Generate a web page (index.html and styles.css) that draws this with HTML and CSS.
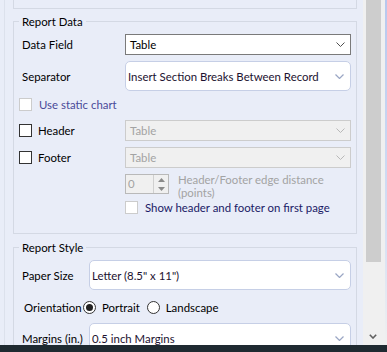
FILE: index.html
```html
<!DOCTYPE html>
<html>
<head>
<meta charset="utf-8">
<link rel="stylesheet" href="styles.css">
</head>
<body>
<div class="screen">
  <div class="main">
    <div class="pane">
      <div class="pane-inner">
        <div class="prev"></div>
        <fieldset class="group group-data">
          <legend>Report Data</legend>
          <div class="row r-field">
            <span class="lbl">Data Field</span>
            <div class="combo combo-flat"><span>Table</span>
              <svg class="chev" width="9" height="5" viewBox="0 0 9 5"><polyline points="0.5,0.5 4.5,4.5 8.5,0.5" fill="none" stroke="#505050" stroke-width="1"/></svg>
            </div>
          </div>
          <div class="row r-sep">
            <span class="lbl">Separator</span>
            <div class="combo combo-round"><span class="val">Insert Section Breaks Between Record</span>
              <svg class="chev" width="9" height="5" viewBox="0 0 9 5"><polyline points="0.5,0.5 4.5,4.5 8.5,0.5" fill="none" stroke="#9aa6c4" stroke-width="1.2"/></svg>
            </div>
          </div>
          <div class="row r-static">
            <span class="cb cb-dis"></span><span class="cb-text static">Use static chart</span>
          </div>
          <div class="row r-header">
            <span class="cb-lbl"><span class="cb"></span><span class="cb-text">Header</span></span>
            <div class="combo combo-dis"><span>Table</span>
              <svg class="chev" width="9" height="5" viewBox="0 0 9 5"><polyline points="0.5,0.5 4.5,4.5 8.5,0.5" fill="none" stroke="#b8b8b8" stroke-width="1"/></svg>
            </div>
          </div>
          <div class="row r-footer">
            <span class="cb-lbl"><span class="cb"></span><span class="cb-text">Footer</span></span>
            <div class="combo combo-dis"><span>Table</span>
              <svg class="chev" width="9" height="5" viewBox="0 0 9 5"><polyline points="0.5,0.5 4.5,4.5 8.5,0.5" fill="none" stroke="#b8b8b8" stroke-width="1"/></svg>
            </div>
          </div>
          <div class="row r-spin">
            <div class="spin">
              <span class="spin-val">0</span>
              <span class="spin-btns">
                <span class="spin-btn"><svg width="7" height="4" viewBox="0 0 7 4"><polygon points="3.5,0 7,4 0,4" fill="#8a8a8a"/></svg></span>
                <span class="spin-btn"><svg width="7" height="4" viewBox="0 0 7 4"><polygon points="0,0 7,0 3.5,4" fill="#8a8a8a"/></svg></span>
              </span>
            </div>
            <span class="spin-lbl">Header/Footer edge distance<br>(points)</span>
          </div>
          <div class="row r-show">
            <span class="cb cb-dis"></span><span class="cb-text show">Show header and footer on first page</span>
          </div>
        </fieldset>
        <fieldset class="group group-style">
          <legend>Report Style</legend>
          <div class="row r-paper">
            <span class="lbl lbl-s">Paper Size</span>
            <div class="combo combo-round"><span class="val">Letter (8.5" x 11")</span>
              <svg class="chev" width="9" height="5" viewBox="0 0 9 5"><polyline points="0.5,0.5 4.5,4.5 8.5,0.5" fill="none" stroke="#9aa6c4" stroke-width="1.2"/></svg>
            </div>
          </div>
          <div class="row r-orient">
            <span class="lbl lbl-o">Orientation</span>
            <span class="radio checked"></span><span class="radio-text">Portrait</span>
            <span class="radio"></span><span class="radio-text">Landscape</span>
          </div>
          <div class="row r-margins">
            <span class="lbl lbl-s">Margins (in.)</span>
            <div class="combo combo-round"><span class="val">0.5 inch Margins</span>
              <svg class="chev" width="9" height="5" viewBox="0 0 9 5"><polyline points="0.5,0.5 4.5,4.5 8.5,0.5" fill="none" stroke="#9aa6c4" stroke-width="1.2"/></svg>
            </div>
          </div>
        </fieldset>
      </div>
    </div>
    <div class="scrollbar">
      <div class="thumb"></div>
      <div class="track"></div>
      <div class="sb-arrow"><svg width="8" height="5" viewBox="0 0 8 5"><polyline points="0.8,0.8 4,4 7.2,0.8" fill="none" stroke="#606060" stroke-width="1.6"/></svg></div>
    </div>
    <div class="edge"></div>
  </div>
  <div class="taskbar"></div>
</div>
</body>
</html>
```
FILE: styles.css
```css
* { box-sizing: border-box; }
html, body { margin: 0; padding: 0; }
body {
  width: 387px;
  height: 352px;
  overflow: hidden;
  background: #e9edf8;
  font-family: Lato, "Liberation Sans", sans-serif;
  font-size: 11.4px;
  color: #000;
}
.screen { display: flex; flex-direction: column; height: 352px; }
.main { display: flex; height: 345px; overflow: hidden; }
.pane { width: 363px; padding-left: 4px; }
.pane-inner {
  height: 100%;
  border-left: 1px solid #dce1ec;
  padding-left: 8px;
  padding-right: 6px;
}
.prev {
  height: 9px;
  border: 1px solid #d4d9e4;
  border-top: 0;
}
.group {
  margin: 5px 0 0;
  padding: 0 5px 0 0;
  border: 1px solid #d4d9e4;
  min-width: 0;
}
.group-data { padding-bottom: 19px; }
.group-style { margin-top: 6px; }
legend {
  margin-left: 5px;
  padding: 0 3px;
  line-height: 15px;
  font-size: 11.4px;
}
.row { display: flex; align-items: center; }
.lbl { width: 111px; padding-left: 8px; flex: none; }
.lbl-s { width: 75px; }
.lbl-o { width: 69px; padding-left: 10px; }
.r-field { margin-top: 5px; }
.r-sep { margin-top: 6px; }
.r-static { margin-top: 7px; height: 13px; padding-left: 5px; }
.r-header { margin-top: 9px; }
.r-footer { margin-top: 6px; }
.r-spin { margin-top: 6px; height: 20px; padding-left: 111px; }
.r-show { margin-top: 7px; height: 13px; padding-left: 111px; }
.r-paper { margin-top: 5px; }
.r-orient { margin-top: 8px; height: 18px; }
.r-margins { margin-top: 7px; }

.combo {
  flex: 1;
  display: flex;
  align-items: center;
  justify-content: space-between;
  background: #fff;
}
.combo-flat {
  height: 21px;
  border: 1px solid #7a7a7a;
  padding: 0 5px 0 4px;
}
.combo-round {
  height: 30px;
  border: 1px solid #c6cfe6;
  border-radius: 5px;
  padding: 0 6px 0 2px;
  color: #1c1230;
}
.combo-dis {
  height: 21px;
  background: #f0f0f0;
  border: 1px solid #cccccc;
  color: #a3a3a3;
  padding: 0 5px 0 4px;
}
.chev { display: block; flex: none; }

.cb-lbl { width: 111px; flex: none; display: flex; align-items: center; padding-left: 5px; }
.cb {
  width: 13px;
  height: 13px;
  border: 1px solid #333;
  background: #fff;
  flex: none;
}
.cb-dis { border-color: #cccccc; }
.cb-text { margin-left: 6px; }
.static { margin-left: 7px; color: #4a4a98; }
.show { margin-left: 7px; color: #1a1a66; }

.spin {
  width: 44px;
  height: 20px;
  border: 1px solid #b9b9b9;
  background: #f0f0f0;
  display: flex;
  flex: none;
}
.spin-val { flex: 1; padding-left: 2px; color: #a3a3a3; line-height: 18px; }
.spin-btns {
  width: 15px;
  display: flex;
  flex-direction: column;
  border-left: 1px solid #d0d0d0;
}
.spin-btn { flex: 1; display: flex; align-items: center; justify-content: center; }
.spin-lbl {
  margin-left: 9px;
  padding-top: 3px;
  line-height: 13px;
  color: #a3a3a3;
}

.radio {
  width: 13px;
  height: 13px;
  border: 1px solid #333;
  border-radius: 50%;
  background: #fff;
  flex: none;
  display: flex;
  align-items: center;
  justify-content: center;
}
.radio.checked::after {
  content: "";
  width: 7px;
  height: 7px;
  border-radius: 50%;
  background: #222;
}
.radio-text { margin-left: 6px; margin-right: 7px; }

.scrollbar {
  width: 22px;
  flex: none;
  background: #f0f0f0;
  display: flex;
  flex-direction: column;
  padding-left: 3px;
  padding-right: 4px;
}
.thumb { height: 262px; background: #cdcdcd; flex: none; }
.track { flex: 1; }
.sb-arrow { height: 17px; display: flex; justify-content: center; align-items: center; padding-right: 1px; }
.edge {
  width: 2px;
  flex: none;
  background: linear-gradient(#b7c8ee, #d8e1f4 70%, #f0f0f0);
}
.taskbar { height: 7px; background: #1f2a31; }
```
